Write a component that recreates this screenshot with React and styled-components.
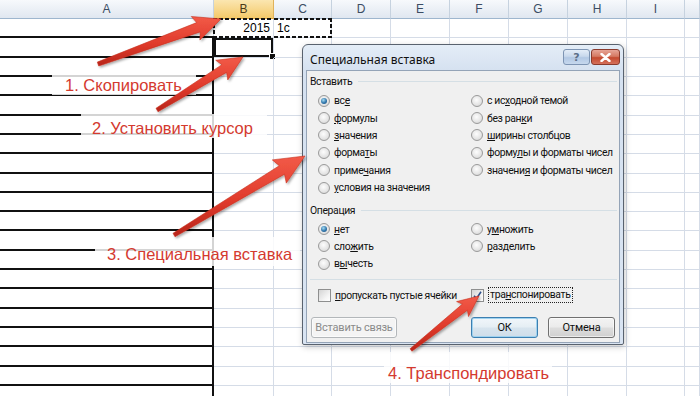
import React from 'react';
import styled, { createGlobalStyle } from 'styled-components';

const Global = createGlobalStyle`
  html, body { margin: 0; padding: 0; background: #fff; }
  body { width: 700px; height: 396px; overflow: hidden; font-family: "Liberation Sans", Arial, sans-serif; }
`;

const Stage = styled.div`
  position: relative;
  width: 700px;
  height: 396px;
  overflow: hidden;
  background: #fff;
`;

const Sheet = styled.div`
  display: grid;
  grid-template-columns: 214px 60px 58px 59px 59px 59px 59px 59px 58px 15px;
  grid-template-rows: 19px;
  grid-auto-rows: 19.32px;
`;

const ColHead = styled.div`
  box-sizing: border-box;
  display: flex;
  align-items: center;
  justify-content: center;
  font: 12px "Liberation Sans", Arial, sans-serif;
  color: ${p => (p.$active ? '#4a3a1a' : '#3b4c63')};
  background: ${p => (p.$active ? 'linear-gradient(#fbe6b0, #f4c96a)' : 'linear-gradient(#f7f9fc, #e0e7f0)')};
  border-right: 1px solid ${p => (p.$active ? '#e0b25a' : '#c6d2df')};
  border-bottom: 1px solid ${p => (p.$active ? '#e2a93c' : '#9eb6ce')};
`;

const Cell = styled.div`
  box-sizing: border-box;
  position: relative;
  display: flex;
  align-items: center;
  justify-content: ${p => (p.$align === 'right' ? 'flex-end' : 'flex-start')};
  padding: 0 3px;
  font: 12px "Liberation Sans", Arial, sans-serif;
  color: #000;
  border-right: ${p => (p.$thickRight ? '2px solid #111' : '1px solid #d5dce7')};
  border-bottom: ${p => (p.$thickBottom ? '2px solid #111' : '1px solid #d5dce7')};
  box-shadow: ${p => (p.$selected ? 'inset 0 0 0 2px #111' : 'none')};
`;

const Marquee = styled.span`
  position: absolute;
  inset: -1px ${p => (p.$side === 'right' ? '-1px' : '0')} -1px ${p => (p.$side === 'left' ? '-1px' : '0')};
  pointer-events: none;
  background:
    linear-gradient(90deg, #111 62%, transparent 0) top left / 6px 2px repeat-x,
    linear-gradient(90deg, #111 62%, transparent 0) bottom left / 6px 2px repeat-x,
    ${p =>
      p.$side === 'left'
        ? 'linear-gradient(#111 62%, transparent 0) top left / 2px 6px repeat-y'
        : 'linear-gradient(#111 62%, transparent 0) top right / 2px 6px repeat-y'};
`;

const FillHandle = styled.span`
  position: absolute;
  right: -3px;
  bottom: -3px;
  width: 5px;
  height: 5px;
  background: #111;
  border: 1px solid #fff;
`;

const Note = styled.div`
  position: absolute;
  left: ${p => p.$x}px;
  top: ${p => p.$y}px;
  line-height: ${p => p.$lh}px;
  padding: ${p => p.$pt}px ${p => p.$pr}px ${p => p.$pb || 0}px ${p => p.$pl}px;
  font: 16.5px "Liberation Sans", Arial, sans-serif;
  color: #d43a2f;
  background: rgba(255, 255, 255, 0.82);
  white-space: nowrap;
`;

/* ---------- dialog ---------- */

const Window = styled.div`
  position: absolute;
  left: 302px;
  top: 44px;
  width: 322px;
  height: 301px;
  box-sizing: border-box;
  border: 1px solid #59626e;
  border-radius: 6px 6px 2px 2px;
  background: linear-gradient(#e4edf7, #d5e1f0 26px, #d9e4f2);
  box-shadow: 1px 2px 6px rgba(0, 0, 0, 0.22);
  display: flex;
  flex-direction: column;
  font-family: Roboto, "Noto Sans", sans-serif;
  color: #111;
`;

const TitleBar = styled.div`
  height: 25px;
  flex: none;
  display: flex;
  align-items: flex-start;
  padding: 0 3px 0 7px;
`;

const Title = styled.div`
  font: 12px "Noto Sans", "Open Sans", sans-serif;
  margin-top: 6px;
  flex: 1;
`;

const CapButtons = styled.div`
  display: flex;
  gap: 1px;
  margin-top: 4px;
`;

const CapButton = styled.div`
  width: ${p => (p.$close ? 29 : 27)}px;
  height: 16px;
  box-sizing: border-box;
  border: 1px solid ${p => (p.$close ? '#8a3a2c' : '#7d94b3')};
  border-radius: 3px;
  background: ${p =>
    p.$close
      ? 'linear-gradient(#e6a597, #d57a64 45%, #c44a30 55%, #d4705a)'
      : 'linear-gradient(#e4edf8, #c8d8ec 45%, #b2c8e4 55%, #c6d8ee)'};
  display: flex;
  align-items: center;
  justify-content: center;
  color: ${p => (p.$close ? '#fff' : '#5d6f88')};
  font: bold 11px "DejaVu Sans", sans-serif;
`;

const Body = styled.div`
  flex: 1;
  margin: 0 3px 2px 3px;
  box-sizing: border-box;
  border: 1px solid #95a4b7;
  background: #f0f0f0;
  padding: 3px 2px 4px 3px;
  display: flex;
  flex-direction: column;
  font-size: 10.4px;
  letter-spacing: -0.35px;
`;

const GroupHeader = styled.div`
  height: 14px;
  display: flex;
  align-items: center;
  gap: 6px;
  margin-top: ${p => p.$mt || 0}px;
  &::after {
    content: '';
    flex: 1;
    height: 1px;
    background: #d5dfe5;
  }
`;

const OptionGrid = styled.div`
  display: grid;
  grid-template-columns: 153px 1fr;
  grid-template-rows: repeat(${p => p.$rows}, 17.4px);
  grid-auto-flow: column;
  padding-left: 8px;
  margin-top: ${p => p.$mt}px;
`;

const Option = styled.div`
  display: flex;
  align-items: center;
  gap: 4px;
  white-space: nowrap;
`;

const RadioCircle = styled.span`
  position: relative;
  width: 12px;
  height: 12px;
  box-sizing: border-box;
  border-radius: 50%;
  border: 1px solid #9a9a9a;
  background: radial-gradient(circle at 45% 40%, #fdfdfd, #e6e6e6 55%, #cfcfcf);
  flex: none;
  &::after {
    content: '';
    display: ${p => (p.$on ? 'block' : 'none')};
    position: absolute;
    left: 2px;
    top: 2px;
    width: 6px;
    height: 6px;
    border-radius: 50%;
    background: radial-gradient(circle at 40% 35%, #a6dcf2, #2f75ab 55%, #1a4b78);
  }
`;

const Separator = styled.div`
  height: 1px;
  background: #d5dfe5;
  margin: ${p => p.$mt}px 0 0 0;
`;

const CheckRow = styled.div`
  display: grid;
  grid-template-columns: 153px 1fr;
  height: 17px;
  padding-left: 8px;
  margin-top: 7px;
`;

const CheckBox = styled.span`
  width: 13px;
  height: 13px;
  box-sizing: border-box;
  border: 1px solid #8e8f8f;
  background: linear-gradient(135deg, #d4d4d4, #f6f6f6 70%, #fff);
  display: flex;
  align-items: center;
  justify-content: center;
  flex: none;
`;

const Focus = styled.span`
  border: 1px dotted #222;
  padding: 0 1px;
  line-height: 14px;
`;

const Footer = styled.div`
  display: flex;
  align-items: center;
  gap: 10px;
  margin-top: 13px;
  padding: 0 2px 0 1px;
`;

const Btn = styled.div`
  height: 21px;
  width: ${p => p.$w}px;
  box-sizing: border-box;
  border-radius: 3px;
  display: flex;
  align-items: center;
  justify-content: center;
  font-size: 11px;
  letter-spacing: -0.2px;
  margin-left: ${p => (p.$push ? 'auto' : '0')};
  color: ${p => (p.$disabled ? '#8a8a8a' : '#111')};
  border: 1px solid ${p => (p.$disabled ? '#b3b7ba' : p.$default ? '#3c7fb1' : '#707070')};
  background: ${p =>
    p.$disabled
      ? '#f4f4f4'
      : p.$default
      ? 'linear-gradient(#f1f6fa, #e5eef4 48%, #d7e4ee 52%, #cfdde9)'
      : 'linear-gradient(#f3f3f3, #ebebeb 48%, #dddddd 52%, #d0d0d0)'};
  box-shadow: ${p => (p.$default ? 'inset 0 0 0 1px #9fd2ef' : 'inset 0 0 0 1px rgba(255,255,255,.6)')};
`;

const U = styled.span`
  text-decoration: underline;
  text-underline-offset: 1px;
`;

const Overlay = styled.svg`
  position: absolute;
  left: 0;
  top: 0;
  pointer-events: none;
`;

/* ---------- data ---------- */

const cols = ['A', 'B', 'C', 'D', 'E', 'F', 'G', 'H', 'I', ''];
const ROWS = 20;

const pasteOptions = [
  { on: true, label: <>вс<U>е</U></> },
  { label: <><U>ф</U>ормулы</> },
  { label: <><U>з</U>начения</> },
  { label: <>форма<U>т</U>ы</> },
  { label: <>приме<U>ч</U>ания</> },
  { label: <><U>у</U>словия на значения</> },
  { label: <>с ис<U>х</U>одной темой</> },
  { label: <>без ран<U>к</U>и</> },
  { label: <><U>ш</U>ирины столбцов</> },
  { label: <>форму<U>л</U>ы и форматы чисел</> },
  { label: <>значени<U>я</U> и форматы чисел</> },
];

const opOptions = [
  { on: true, label: <><U>н</U>ет</> },
  { label: <>сло<U>ж</U>ить</> },
  { label: <>в<U>ы</U>честь</> },
  { label: <>у<U>м</U>ножить</> },
  { label: <><U>р</U>азделить</> },
];

const arrows = [
  { tail: [98, 64], tip: [221, 19], w0: 4, w1: 10, hw: 25, hl: 24 },
  { tail: [157, 110], tip: [243, 57], w0: 4, w1: 9, hw: 23, hl: 22 },
  { tail: [174, 235], tip: [305, 156], w0: 4, w1: 10, hw: 27, hl: 27 },
  { tail: [411, 350], tip: [479, 296], w0: 3, w1: 8, hw: 19, hl: 18 },
];

function arrowPoints({ tail, tip, w0, w1, hw, hl }) {
  const dx = tip[0] - tail[0];
  const dy = tip[1] - tail[1];
  const len = Math.hypot(dx, dy);
  const ux = dx / len;
  const uy = dy / len;
  const nx = -uy;
  const ny = ux;
  const bx = tip[0] - ux * hl;
  const by = tip[1] - uy * hl;
  const sweep = 3;
  const pts = [
    [tail[0] + (nx * w0) / 2, tail[1] + (ny * w0) / 2],
    [bx + (nx * w1) / 2, by + (ny * w1) / 2],
    [bx - ux * sweep + (nx * hw) / 2, by - uy * sweep + (ny * hw) / 2],
    tip,
    [bx - ux * sweep - (nx * hw) / 2, by - uy * sweep - (ny * hw) / 2],
    [bx - (nx * w1) / 2, by - (ny * w1) / 2],
    [tail[0] - (nx * w0) / 2, tail[1] - (ny * w0) / 2],
  ];
  return pts.map(p => `${p[0].toFixed(1)},${p[1].toFixed(1)}`).join(' ');
}

function Radio({ on, label }) {
  return (
    <Option>
      <RadioCircle $on={on} />
      <span>{label}</span>
    </Option>
  );
}

function SheetGrid() {
  const cells = [];
  cols.forEach((c, i) => cells.push(<ColHead key={`h${i}`} $active={c === 'B'}>{c}</ColHead>));
  for (let r = 1; r <= ROWS; r++) {
    cols.forEach((c, i) => {
      const key = `${r}-${i}`;
      if (c === 'A') {
        cells.push(<Cell key={key} $thickBottom $thickRight={r >= 2} />);
      } else if (r === 1 && c === 'B') {
        cells.push(
          <Cell key={key} $align="right">
            2015
            <Marquee $side="left" />
          </Cell>
        );
      } else if (r === 1 && c === 'C') {
        cells.push(
          <Cell key={key}>
            1с
            <Marquee $side="right" />
          </Cell>
        );
      } else if (r === 2 && c === 'B') {
        cells.push(
          <Cell key={key} $selected>
            <FillHandle />
          </Cell>
        );
      } else {
        cells.push(<Cell key={key} />);
      }
    });
  }
  return <Sheet>{cells}</Sheet>;
}

function PasteSpecial() {
  return (
    <Window>
      <TitleBar>
        <Title>Специальная вставка</Title>
        <CapButtons>
          <CapButton>?</CapButton>
          <CapButton $close>
            <svg width="11" height="9" viewBox="0 0 11 9">
              <path d="M1.5 1 L9.5 8 M9.5 1 L1.5 8" stroke="#fff" strokeWidth="2.4" strokeLinecap="round" />
            </svg>
          </CapButton>
        </CapButtons>
      </TitleBar>
      <Body>
        <GroupHeader>Вставить</GroupHeader>
        <OptionGrid $rows={6} $mt={4}>
          {pasteOptions.map((o, i) => (
            <Radio key={i} {...o} />
          ))}
        </OptionGrid>
        <GroupHeader $mt={7}>Операция</GroupHeader>
        <OptionGrid $rows={3} $mt={3}>
          {opOptions.map((o, i) => (
            <Radio key={i} {...o} />
          ))}
        </OptionGrid>
        <Separator $mt={6} />
        <CheckRow>
          <Option>
            <CheckBox />
            <span>
              <U>п</U>ропускать пустые ячейки
            </span>
          </Option>
          <Option>
            <CheckBox>
              <svg width="9" height="9" viewBox="0 0 9 9">
                <path d="M1 4.8 L3.4 7.6 L8 0.8" fill="none" stroke="#2b4f8c" strokeWidth="1.6" />
              </svg>
            </CheckBox>
            <Focus>
              тра<U>н</U>спонировать
            </Focus>
          </Option>
        </CheckRow>
        <Footer>
          <Btn $w={86} $disabled>
            Вставить связь
          </Btn>
          <Btn $w={67} $default $push>
            ОК
          </Btn>
          <Btn $w={67}>Отмена</Btn>
        </Footer>
      </Body>
    </Window>
  );
}

export default function App() {
  return (
    <>
      <Global />
      <Stage>
        <SheetGrid />
        <Note $x={52} $y={73} $lh={30} $pt={3} $pl={13} $pr={14}>1. Скопировать</Note>
        <Note $x={81} $y={114} $lh={30} $pt={5} $pl={11} $pr={14}>2. Установить курсор</Note>
        <Note $x={95} $y={237} $lh={20} $pt={8} $pb={2} $pl={12} $pr={8}>3. Специальная вставка</Note>
        <Note $x={384} $y={352} $lh={30} $pt={12} $pl={4} $pr={3}>4. Транспондировать</Note>
        <PasteSpecial />
        <Overlay width="700" height="396" viewBox="0 0 700 396">
          <defs>
            <linearGradient id="redFill" x1="0" y1="0" x2="0" y2="1">
              <stop offset="0" stopColor="#f25a48" />
              <stop offset="0.55" stopColor="#e03a2b" />
              <stop offset="1" stopColor="#b8251a" />
            </linearGradient>
            <filter id="shadow" x="-20%" y="-20%" width="140%" height="140%">
              <feDropShadow dx="1.5" dy="1.5" stdDeviation="1.2" floodColor="#000" floodOpacity="0.35" />
            </filter>
          </defs>
          {arrows.map((a, i) => (
            <polygon key={i} points={arrowPoints(a)} fill="url(#redFill)" stroke="#c8301f" strokeWidth="0.6" strokeLinejoin="round" filter="url(#shadow)" />
          ))}
        </Overlay>
      </Stage>
    </>
  );
}
